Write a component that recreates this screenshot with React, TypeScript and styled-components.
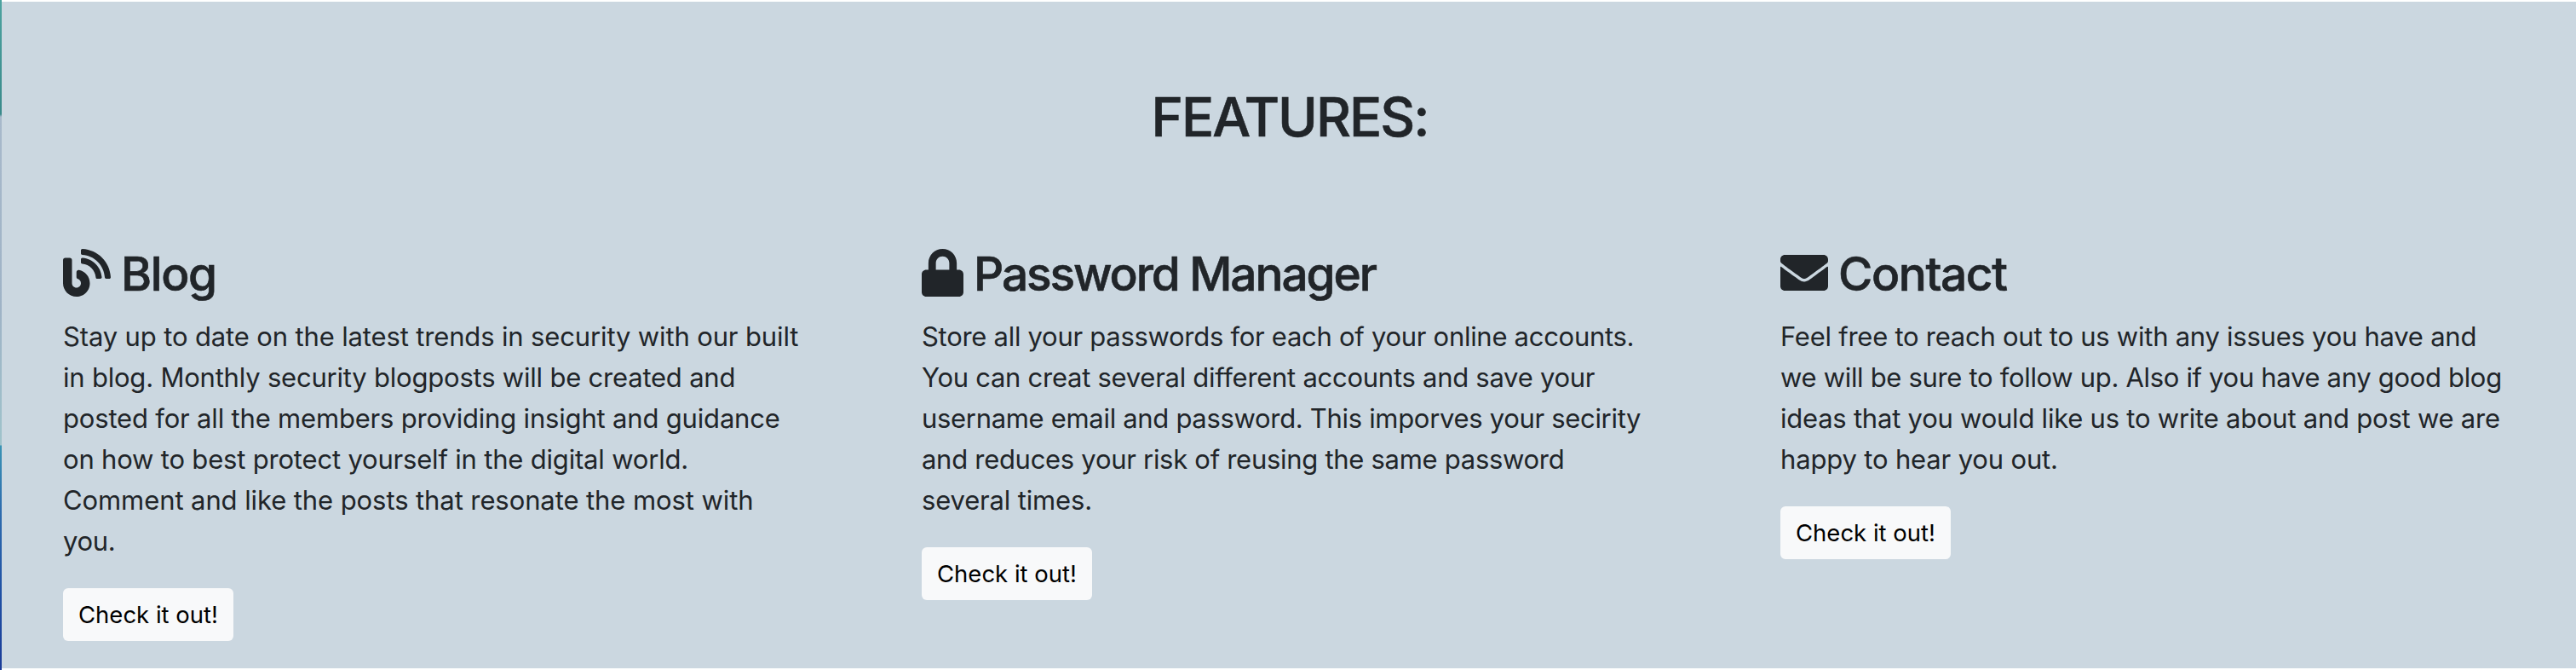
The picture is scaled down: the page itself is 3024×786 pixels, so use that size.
import React from "react";
import type { IconType } from "react-icons";
import styled, { createGlobalStyle } from "styled-components";
import { FaBlog, FaLock, FaEnvelope } from "react-icons/fa";

const GlobalStyle = createGlobalStyle`
  *, *::before, *::after { box-sizing: border-box; }
  body {
    margin: 0;
    background: #fff;
    color: #212529;
    font-family: Inter, "Liberation Sans", sans-serif;
  }
`;

const Page = styled.div`
  display: flex;
  height: 786px;
  overflow: hidden;
`;

const Edge = styled.div`
  width: 2px;
  flex: none;
  background: linear-gradient(
    #4da3a0 0,
    #3a8a8b 134px,
    #a8b9cb 137px,
    #9fb3c6 360px,
    #9fc3cb 522px,
    #3a93b5 523px,
    #2e6cae 600px,
    #2050a4 700px,
    #1b3c98 786px
  );
`;

const Section = styled.section`
  flex: 1;
  margin: 2px 0;
  padding-top: 97px;
  background: #cbd7e0;
`;

const Title = styled.h1`
  margin: 0;
  font-size: 63.4px;
  line-height: 77px;
  font-weight: 500;
  text-align: center;
  letter-spacing: -2px;
  -webkit-text-stroke: 0.6px currentColor;
`;

const Columns = styled.div`
  display: flex;
  padding-top: 111px;
`;

const Column = styled.article`
  width: 1008px;
  flex: none;
  padding-left: 72px;
`;

const Heading = styled.h2<{ $tracking: number }>`
  display: flex;
  align-items: flex-start;
  gap: 12px;
  height: 67px;
  margin: 0 0 17px;
  padding-top: 1px;
  font-size: 55px;
  line-height: 67px;
  font-weight: 500;
  letter-spacing: ${(p) => p.$tracking}px;
  -webkit-text-stroke: 0.6px currentColor;
`;

const IconBox = styled.span<{ $width: number }>`
  flex: none;
  width: ${(p) => p.$width}px;
  height: 56px;
  margin-top: 4px;

  svg {
    display: block;
    width: 100%;
    height: 100%;
  }
`;

const Copy = styled.p`
  margin: 0 0 31px;
  font-size: 31px;
  line-height: 48px;
`;

const Line = styled.span<{ $tracking: number }>`
  display: block;
  white-space: nowrap;
  letter-spacing: ${(p) => p.$tracking}px;
`;

const Button = styled.button`
  display: block;
  width: 200px;
  height: 62px;
  padding: 0;
  border: 0;
  border-radius: 6px;
  background: #f8f9fa;
  color: #000;
  font: 400 27.5px/62px Inter, "Liberation Sans", sans-serif;
`;

interface Feature {
  name: string;
  Icon: IconType;
  iconWidth: number;
  tracking: number;
  lines: [string, number][];
}

const features: Feature[] = [
  {
    name: "Blog",
    Icon: FaBlog,
    iconWidth: 56,
    tracking: -1.4,
    lines: [
      ["Stay up to date on the latest trends in security with our built", -0.14],
      ["in blog. Monthly security blogposts will be created and", -0.21],
      ["posted for all the members providing insight and guidance", -0.18],
      ["on how to best protect yourself in the digital world.", -0.187],
      ["Comment and like the posts that resonate the most with", -0.09],
      ["you.", -0.3],
    ],
  },
  {
    name: "Password Manager",
    Icon: FaLock,
    iconWidth: 49,
    tracking: -2.12,
    lines: [
      ["Store all your passwords for each of your online accounts.", -0.285],
      ["You can creat several different accounts and save your", -0.27],
      ["username email and password. This imporves your secirity", -0.316],
      ["and reduces your risk of reusing the same password", -0.29],
      ["several times.", -0.16],
    ],
  },
  {
    name: "Contact",
    Icon: FaEnvelope,
    iconWidth: 56,
    tracking: -1.4,
    lines: [
      ["Feel free to reach out to us with any issues you have and", -0.25],
      ["we will be sure to follow up. Also if you have any good blog", -0.32],
      ["ideas that you would like us to write about and post we are", -0.232],
      ["happy to hear you out.", -0.16],
    ],
  },
];

export default function App() {
  return (
    <>
      <GlobalStyle />
      <Page>
        <Edge />
        <Section>
          <Title>FEATURES:</Title>
          <Columns>
            {features.map(({ name, Icon, iconWidth, tracking, lines }) => (
              <Column key={name}>
                <Heading $tracking={tracking}>
                  <IconBox $width={iconWidth}>
                    <Icon />
                  </IconBox>
                  {name}
                </Heading>
                <Copy>
                  {lines.map(([text, spacing]) => (
                    <Line key={text} $tracking={spacing}>
                      {text}
                    </Line>
                  ))}
                </Copy>
                <Button>Check it out!</Button>
              </Column>
            ))}
          </Columns>
        </Section>
      </Page>
    </>
  );
}
